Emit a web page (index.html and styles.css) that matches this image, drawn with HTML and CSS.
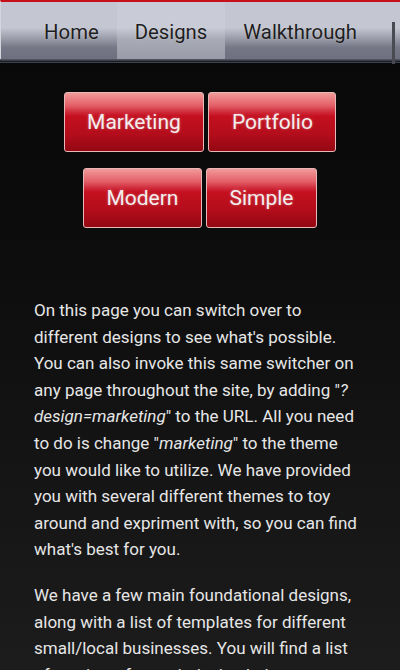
FILE: index.html
```html
<!DOCTYPE html>
<html lang="en">
<head>
<meta charset="utf-8">
<title>Designs</title>
<link rel="stylesheet" href="styles.css">
</head>
<body>
<header class="topbar">
  <nav class="nav">
    <a class="nav-item" href="#">Home</a>
    <a class="nav-item active" href="#">Designs</a>
    <a class="nav-item" href="#">Walkthrough</a>
  </nav>
  <span class="scroll-thumb"></span>
</header>
<main class="content">
  <div class="switcher">
    <div class="row">
      <a class="btn" href="#">Marketing</a>
      <a class="btn" href="#">Portfolio</a>
    </div>
    <div class="row">
      <a class="btn" href="#">Modern</a>
      <a class="btn" href="#">Simple</a>
    </div>
  </div>
  <section class="text">
    <p>On this page you can switch over to different designs to see what's possible. You can also invoke this same switcher on any page throughout the site, by adding "<em>?design=marketing</em>" to the URL. All you need to do is change "<em>marketing</em>" to the theme you would like to utilize. We have provided you with several different themes to toy around and expriment with, so you can find what's best for you.</p>
    <p>We have a few main foundational designs, along with a list of templates for different small/local businesses. You will find a list of previews for each design below.</p>
  </section>
</main>
</body>
</html>
```
FILE: styles.css
```css
html, body {
  margin: 0;
  padding: 0;
}
body {
  font-family: Roboto, "Liberation Sans", sans-serif;
  background: linear-gradient(to bottom, #080808 0%, #0c0c0c 35%, #1c1c1c 100%);
  height: 670px;
  overflow: hidden;
  color: #e6e6e6;
}
.topbar {
  position: relative;
  border-top: 2px solid #c8101a;
  background: linear-gradient(to bottom, #c4c7d2 0%, #c4c7d2 45%, #9fa1ae 62%, #757786 80%, #6e7080 100%);
  border-left: 1px solid #d4d6de;
  box-shadow: 0 1px 0 #50525d, 0 2px 0 #3c3e48, 0 3px 0 #1c1d22, 0 4px 0 #3a4450;
}
.nav {
  display: flex;
  justify-content: center;
  height: 57px;
}
.nav-item {
  display: flex;
  align-items: center;
  padding: 2px 18px 0;
  font-size: 20.3px;
  color: #1e1e22;
  text-decoration: none;
  text-shadow: 0 0 2px rgba(255,255,255,0.35);
}
.nav-item.active {
  background: linear-gradient(to bottom, #c9ccd6 0%, #c9ccd6 45%, #a9abb6 65%, #999ba8 100%);
}
.scroll-thumb {
  position: absolute;
  right: 5px;
  top: 20px;
  width: 3px;
  height: 42px;
  background: #4a4b52;
}
.content {
  padding-top: 33px;
}
.switcher {
  display: flex;
  flex-direction: column;
  align-items: center;
  gap: 16px;
}
.row {
  display: flex;
  gap: 4px;
}
.btn {
  display: block;
  padding: 0 22.5px;
  height: 58px;
  line-height: 58px;
  font-size: 21px;
  color: #f2eeee;
  text-decoration: none;
  border: 1px solid #e9b8b8;
  border-radius: 3px;
  background: linear-gradient(to bottom, #f19b9b 0%, #e35e66 22%, #cf2a3a 33%, #c4101f 40%, #b40d1b 70%, #930812 100%);
  text-shadow: 0 0 3px rgba(255,255,255,0.35);
}
.text {
  padding: 69px 34px 0 34px;
}
.text p {
  margin: 0 0 19px;
  font-size: 17px;
  line-height: 26.6px;
}
.text em {
  font-style: italic;
}
```
